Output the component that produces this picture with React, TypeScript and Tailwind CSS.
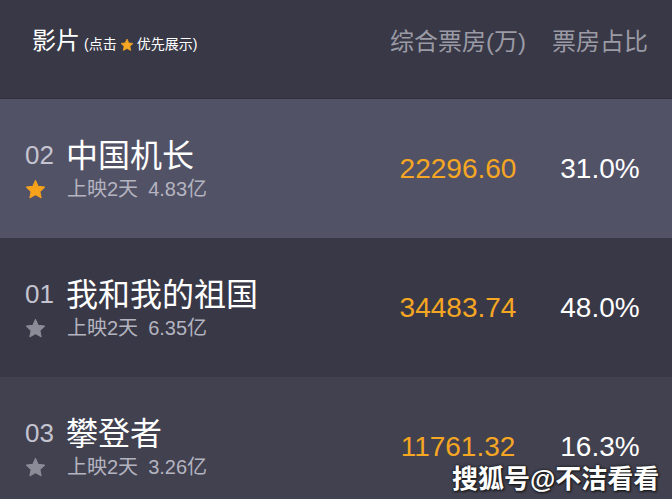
import React from "react";

const FONT = { fontFamily: '"Liberation Sans", "Noto Sans CJK SC", sans-serif' };

function Star({ className }: { className?: string }) {
  return (
    <svg viewBox="0 0 24 24" className={className} fill="currentColor">
      <path d="M12 1.8l3.1 6.6 7.2.9-5.3 5 1.4 7.1L12 17.9l-6.4 3.5 1.4-7.1-5.3-5 7.2-.9z" strokeLinejoin="round" stroke="currentColor" strokeWidth="1.2" />
    </svg>
  );
}

const rows = [
  { rank: "02", title: "中国机长", days: "上映2天", total: "4.83亿", box: "22296.60", pct: "31.0%", active: true, bg: "bg-[#525266]" },
  { rank: "01", title: "我和我的祖国", days: "上映2天", total: "6.35亿", box: "34483.74", pct: "48.0%", active: false, bg: "bg-[#383846]" },
  { rank: "03", title: "攀登者", days: "上映2天", total: "3.26亿", box: "11761.32", pct: "16.3%", active: false, bg: "bg-[#414150]" },
];

export default function App() {
  return (
    <div className="relative w-[672px] h-[499px] overflow-hidden bg-[#383846]" style={FONT}>
      <div className="h-[99px] flex items-center border-b border-[#2f2f3b]">
        <div className="flex-1 pl-[32px] flex items-baseline pb-[14px]">
          <span className="text-[24px] text-white leading-none">影片</span>
          <span className="ml-[4px] text-[14px] text-white flex items-center">
            (点击
            <Star className="w-[14px] h-[14px] text-[#f5a623] mx-[3px]" />
            优先展示)
          </span>
        </div>
        <div className="w-[140px] text-center text-[24px] text-[#9b9ba5] pb-[14px]">综合票房(万)</div>
        <div className="w-[144px] text-center text-[24px] text-[#9b9ba5] pb-[14px]">票房占比</div>
      </div>
      {rows.map((r) => (
        <div key={r.rank} className={`h-[139px] flex items-center ${r.bg}`}>
          <div className="flex-1 pl-[25px] flex flex-col">
            <div className="flex items-center">
              <span className="w-[42px] text-[26px] text-[#c4c4d0] leading-none pb-[2px]">{r.rank}</span>
              <span className="-ml-[1px] text-[32px] text-white leading-[40px]">{r.title}</span>
            </div>
            <div className="flex items-center mt-[1px]">
              <span className="w-[42px]">
                <Star className={`w-[21px] h-[21px] ${r.active ? "text-[#f7a21b]" : "text-[#8c8c98]"}`} />
              </span>
              <span className="text-[20px] text-[#b4b4c0] leading-[24px]">{r.days}</span>
              <span className="ml-[10px] text-[20px] text-[#b4b4c0] leading-[24px]">{r.total}</span>
            </div>
          </div>
          <div className="w-[140px] text-center text-[28px] text-[#f5a623]">{r.box}</div>
          <div className="w-[144px] text-center text-[28px] text-white">{r.pct}</div>
        </div>
      ))}
      <div
        className="absolute left-[452px] top-[466px] text-[26px] font-bold text-white leading-none"
        style={{ textShadow: "0 0 2px #222, 0 0 3px #222, 1px 1px 2px #111" }}
      >
        搜狐号@不洁看看
      </div>
    </div>
  );
}
